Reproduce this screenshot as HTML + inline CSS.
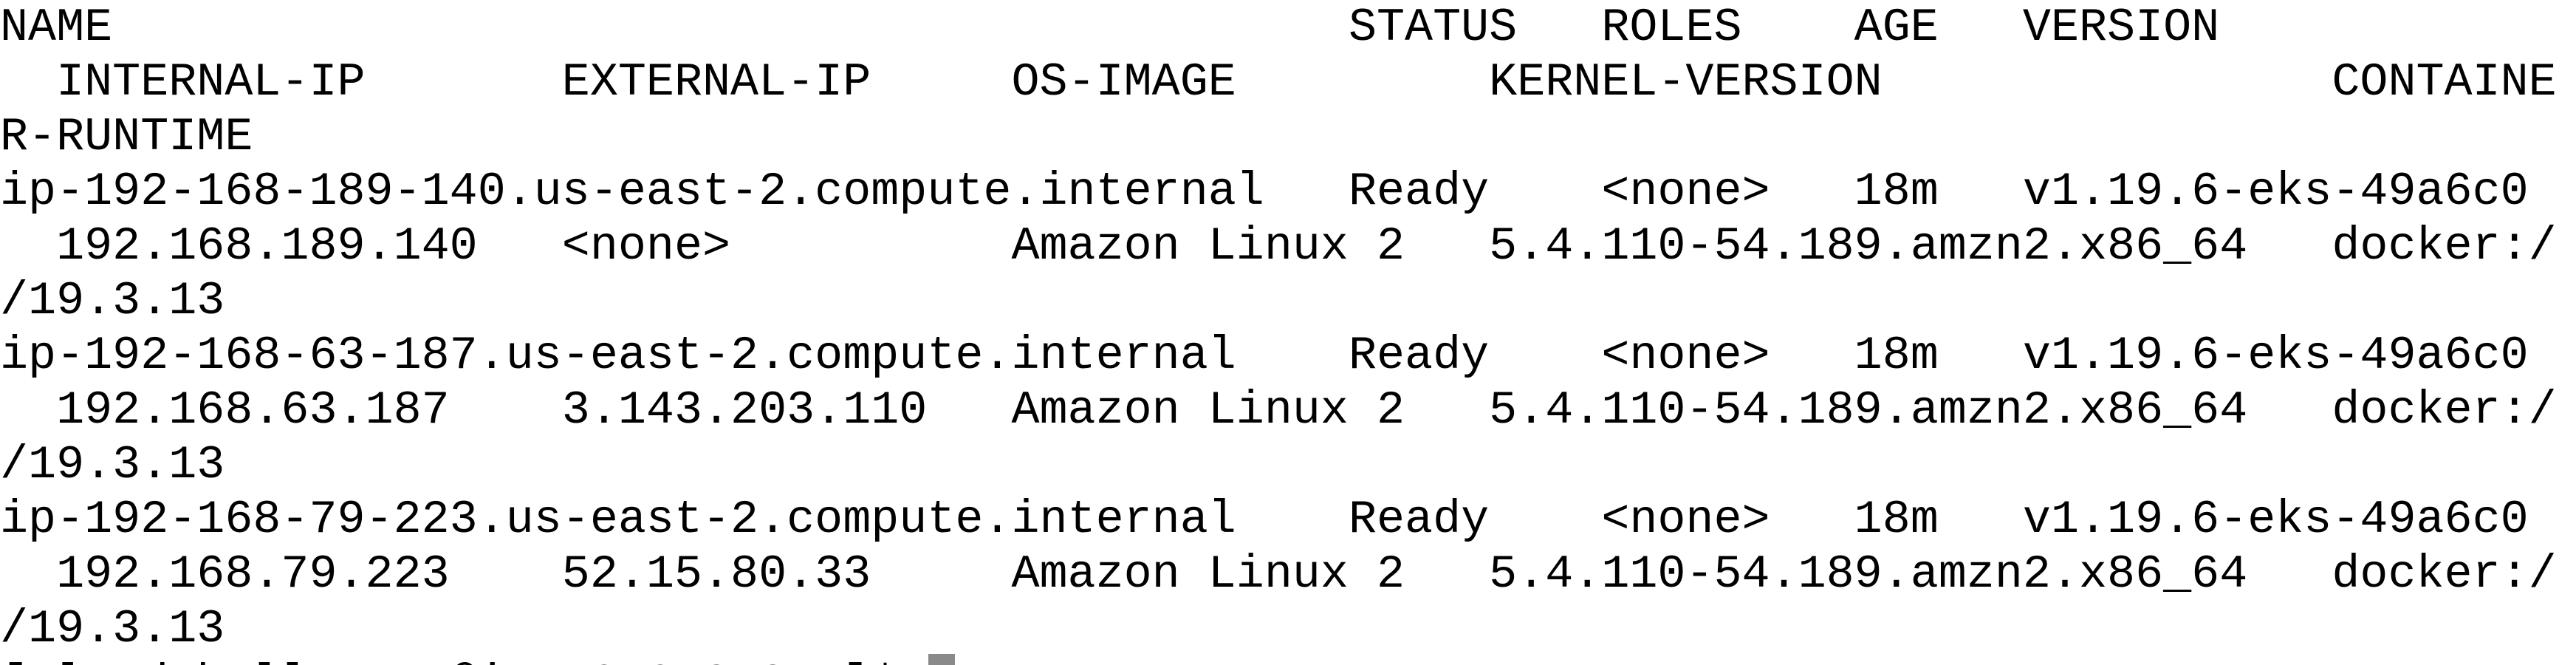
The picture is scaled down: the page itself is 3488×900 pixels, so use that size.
<!DOCTYPE html>
<html><head><meta charset="utf-8"><style>
html,body{margin:0;padding:0;background:#fff;width:3488px;height:900px;overflow:hidden}
#wrap{position:relative;width:3488px;height:900px;overflow:hidden}
pre{position:absolute;left:0;top:1px;margin:0;font-family:"Liberation Mono",monospace;font-size:63.4px;line-height:74px;color:#000;white-space:pre}
.cur{position:absolute;left:1257px;top:885px;width:36px;height:20px;background:#8a8a8a}
</style></head><body><div id="wrap">
<pre>NAME                                            STATUS   ROLES    AGE   VERSION
  INTERNAL-IP       EXTERNAL-IP     OS-IMAGE         KERNEL-VERSION                CONTAINE
R-RUNTIME
ip-192-168-189-140.us-east-2.compute.internal   Ready    &lt;none&gt;   18m   v1.19.6-eks-49a6c0
  192.168.189.140   &lt;none&gt;          Amazon Linux 2   5.4.110-54.189.amzn2.x86_64   docker:/
/19.3.13
ip-192-168-63-187.us-east-2.compute.internal    Ready    &lt;none&gt;   18m   v1.19.6-eks-49a6c0
  192.168.63.187    3.143.203.110   Amazon Linux 2   5.4.110-54.189.amzn2.x86_64   docker:/
/19.3.13
ip-192-168-79-223.us-east-2.compute.internal    Ready    &lt;none&gt;   18m   v1.19.6-eks-49a6c0
  192.168.79.223    52.15.80.33     Amazon Linux 2   5.4.110-54.189.amzn2.x86_64   docker:/
/19.3.13
[cloudshell-user@ip-10-0-8-8 ~]$ </pre>
<div class="cur"></div>
</div></body></html>
